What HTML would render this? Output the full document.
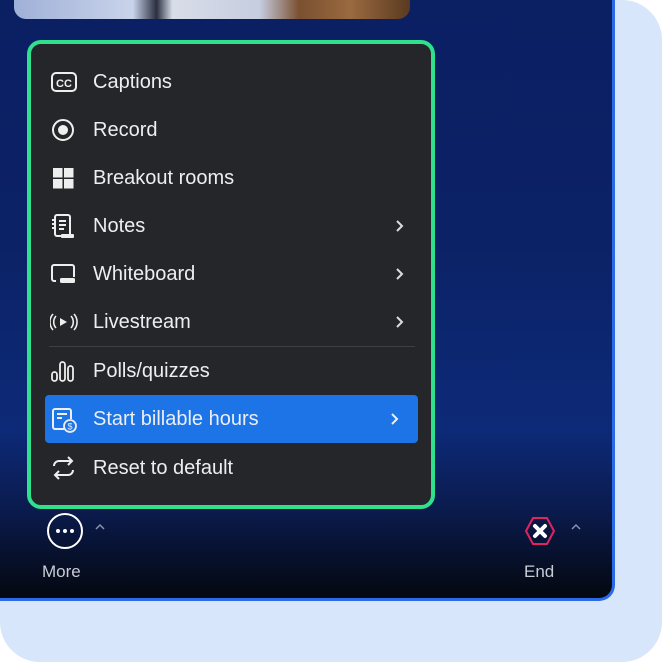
<!DOCTYPE html><html><head><style>
body{margin:0;width:662px;height:662px;background:#fff;font-family:"Liberation Sans",sans-serif;overflow:hidden}
.bg{position:absolute;left:0;top:0;width:662px;height:662px;background:#d8e6fb;border-radius:0 40px 40px 40px}
.panel{position:absolute;left:0;top:0;width:612px;height:598px;border-radius:0 0 16px 0;background:linear-gradient(180deg,#0b1f63 0%,#0c2266 40%,#0d2a78 72%,#0a1a4a 86%,#04080f 100%);border-right:3px solid #2a6ae8;border-bottom:3px solid #2a6ae8}
.photo{position:absolute;left:14px;top:0;width:396px;height:19px;border-radius:0 0 12px 12px;background:linear-gradient(90deg,#9fb0d8 0%,#c9d3ea 30%,#2a2f40 36%,#d8dde8 40%,#c6cde0 62%,#7a5030 72%,#9a6a40 85%,#5a3a20 100%)}
.menu{position:absolute;left:27px;top:40px;width:400px;height:461px;border:4px solid #2fe08c;border-radius:14px;background:#252629}
.it{position:absolute;left:17px;width:373px;height:48px;color:#eceef2;font-size:20px;line-height:48px}
.it span{position:absolute;left:45px}
.it svg{position:absolute;left:2px;top:12px}
.it svg.ch{left:347px;top:17px}
.hl{background:#1c74e6;border-radius:4px}
.lbl{position:absolute;color:#c9ccd4;font-size:17px}
</style></head><body>
<div class="bg"></div>
<div class="panel"></div>
<div class="photo"></div>
<div class="menu">
<div class="it" style="top:14px"><svg width="28" height="24"><rect x="2" y="3" width="24" height="18" rx="4" fill="none" stroke="#eee" stroke-width="2"/><text x="14" y="17" font-size="11" font-weight="bold" fill="#eee" text-anchor="middle" font-family="Liberation Sans">CC</text></svg><span>Captions</span></div>
<div class="it" style="top:62px"><svg width="28" height="24"><circle cx="13" cy="12" r="10" fill="none" stroke="#eee" stroke-width="2"/><circle cx="13" cy="12" r="5" fill="#eee"/></svg><span>Record</span></div>
<div class="it" style="top:110px"><svg width="28" height="24"><rect x="3" y="2" width="9.5" height="9.5" fill="#eee"/><rect x="14" y="2" width="9.5" height="9.5" fill="#eee"/><rect x="3" y="13" width="9.5" height="9.5" fill="#eee"/><rect x="14" y="13" width="9.5" height="9.5" fill="#eee"/></svg><span>Breakout rooms</span></div>
<div class="it" style="top:158px"><svg width="28" height="26"><rect x="5" y="1" width="15" height="21" rx="2" fill="none" stroke="#eee" stroke-width="2"/><path d="M9 7h7M9 11h7M9 15h5M2 6h3M2 10h3M2 14h3" stroke="#eee" stroke-width="2"/><rect x="11" y="20" width="13" height="4" rx="1" fill="#eee"/></svg><span>Notes</span><svg class="ch" width="10" height="14"><path d="M2 2l5 5-5 5" fill="none" stroke="#ddd" stroke-width="2"/></svg></div>
<div class="it" style="top:206px"><svg width="28" height="24"><path d="M6 19H4a2 2 0 0 1-2-2V5a2 2 0 0 1 2-2h18a2 2 0 0 1 2 2v10" fill="none" stroke="#eee" stroke-width="2"/><rect x="10" y="16" width="15" height="5" rx="1.5" fill="#eee"/></svg><span>Whiteboard</span><svg class="ch" width="10" height="14"><path d="M2 2l5 5-5 5" fill="none" stroke="#ddd" stroke-width="2"/></svg></div>
<div class="it" style="top:254px"><svg width="28" height="24"><path d="M10 8l7 4-7 4z" fill="#eee"/><path d="M6 6a9 9 0 0 0 0 12M3 4a12 12 0 0 0 0 16M21 6a9 9 0 0 1 0 12M24 4a12 12 0 0 1 0 16" fill="none" stroke="#eee" stroke-width="1.6"/></svg><span>Livestream</span><svg class="ch" width="10" height="14"><path d="M2 2l5 5-5 5" fill="none" stroke="#ddd" stroke-width="2"/></svg></div>
<div style="position:absolute;left:18px;top:302px;width:366px;height:1px;background:#3d3f44"></div>
<div class="it" style="top:303px"><svg width="28" height="24"><rect x="2" y="13" width="5" height="9" rx="2.5" fill="none" stroke="#eee" stroke-width="1.8"/><rect x="10" y="3" width="5" height="19" rx="2.5" fill="none" stroke="#eee" stroke-width="1.8"/><rect x="18" y="7" width="5" height="15" rx="2.5" fill="none" stroke="#eee" stroke-width="1.8"/></svg><span>Polls/quizzes</span></div>
<div class="it hl" style="top:351px;left:14px;width:373px"><svg width="28" height="26" style="left:5px"><path d="M14 22H5a2 2 0 0 1-2-2V4a2 2 0 0 1 2-2h14a2 2 0 0 1 2 2v8" fill="none" stroke="#eee" stroke-width="2"/><path d="M7 7h10M7 11h5" stroke="#eee" stroke-width="2"/><circle cx="20" cy="19" r="6" fill="none" stroke="#eee" stroke-width="1.8"/><text x="20" y="22.5" font-size="9" fill="#eee" text-anchor="middle" font-family="Liberation Sans">$</text></svg><span style="left:48px">Start billable hours</span><svg class="ch" width="10" height="14" style="left:345px"><path d="M2 2l5 5-5 5" fill="none" stroke="#eee" stroke-width="2"/></svg></div>
<div class="it" style="top:400px"><svg width="28" height="24"><path d="M4 10a5 5 0 0 1 5-5h13M18 1l4 4-4 4M23 14a5 5 0 0 1-5 5H5M9 23l-4-4 4-4" fill="none" stroke="#eee" stroke-width="2"/></svg><span>Reset to default</span></div>
</div>
<svg style="position:absolute;left:45px;top:512px" width="40" height="40"><circle cx="20" cy="19" r="17" fill="none" stroke="#fff" stroke-width="2"/><circle cx="13" cy="19" r="2" fill="#fff"/><circle cx="20" cy="19" r="2" fill="#fff"/><circle cx="27" cy="19" r="2" fill="#fff"/></svg>
<svg style="position:absolute;left:94px;top:522px" width="12" height="10"><path d="M2 7l4-4 4 4" fill="none" stroke="#8892a8" stroke-width="1.5"/></svg>
<svg style="position:absolute;left:520px;top:512px" width="40" height="40"><polygon points="6,19 13,6 27,6 34,19 27,32 13,32" fill="none" stroke="#e0245e" stroke-width="2"/><path d="M15 14l10 10M25 14l-10 10" stroke="#fff" stroke-width="4" stroke-linecap="round"/></svg>
<svg style="position:absolute;left:570px;top:522px" width="12" height="10"><path d="M2 7l4-4 4 4" fill="none" stroke="#8892a8" stroke-width="1.5"/></svg>
<div class="lbl" style="left:42px;top:562px">More</div>
<div class="lbl" style="left:524px;top:562px">End</div>
</body></html>
